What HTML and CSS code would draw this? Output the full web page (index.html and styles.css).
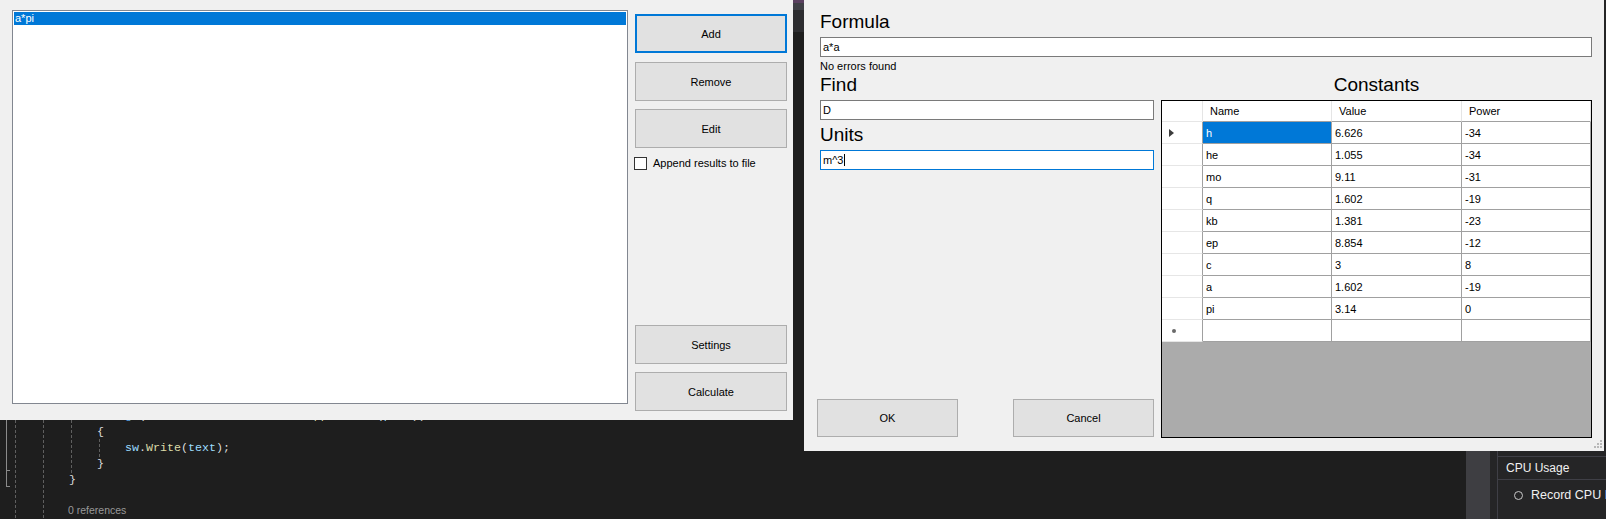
FILE: index.html
```html
<!DOCTYPE html>
<html>
<head>
<meta charset="utf-8">
<link rel="stylesheet" href="styles.css">
</head>
<body>
<div class="desktop">
  <div class="editor">
    <svg class="guides" width="120" height="519" viewBox="0 0 120 519">
      <path d="M6.5 400V487M6.5 470.5H10M6.5 486.5H10" stroke="#8a8a8a" stroke-width="1" fill="none"/>
      <path d="M15.5 400V519M43.5 400V519M71.5 400V474M99.5 439V457" stroke="#5f5f5f" stroke-width="1" stroke-dasharray="3 2" fill="none"/>
    </svg>
    <div class="code">
      <div class="code-line">            <span class="kw">using</span> (<span class="ty">StreamWriter</span> <span class="var">sw</span> = <span class="ty">File</span>.<span class="fn">AppendText</span>(<span class="var">path</span>))</div>
      <div class="code-line">            {</div>
      <div class="code-line">                <span class="var">sw</span>.<span class="fn">Write</span>(<span class="var">text</span>);</div>
      <div class="code-line">            }</div>
      <div class="code-line">        }</div>
      <div class="lens">0 references</div>
    </div>
  </div>

  <div class="scroll-col"></div>
  <div class="tool-panel">
    <div class="tool-inner">
      <div class="tool-head">CPU Usage</div>
      <div class="tool-row"><span class="radio"></span><span>Record CPU Profile</span></div>
    </div>
  </div>

  <div class="strip"></div>

  <div class="win-left">
    <div class="listbox">
      <div class="list-item selected">a*pi</div>
    </div>
    <div class="btn-col">
      <div class="btn default">Add</div>
      <div class="btn">Remove</div>
      <div class="btn">Edit</div>
      <label class="check"><span class="check-box"></span><span>Append results to file</span></label>
      <div class="btn push">Settings</div>
      <div class="btn">Calculate</div>
    </div>
  </div>

  <div class="win-right">
    <div class="big-label">Formula</div>
    <div class="textbox wide">a*a</div>
    <div class="status">No errors found</div>
    <div class="body">
      <div class="left-col">
        <div class="big-label">Find</div>
        <div class="textbox">D</div>
        <div class="big-label">Units</div>
        <div class="textbox focus">m^3<span class="caret"></span></div>
        <div class="dlg-row">
          <div class="btn dlg">OK</div>
          <div class="btn dlg">Cancel</div>
        </div>
      </div>
      <div class="right-col">
        <div class="big-label center">Constants</div>
        <div class="dgv">
          <div class="dgv-row head">
            <div class="cell rh hc"></div>
            <div class="cell hc">Name</div>
            <div class="cell hc">Value</div>
            <div class="cell hc">Power</div>
          </div>
          <div class="dgv-row">
            <div class="cell rh"><span class="tri"></span></div>
            <div class="cell sel">h</div>
            <div class="cell">6.626</div>
            <div class="cell">-34</div>
          </div>
          <div class="dgv-row">
            <div class="cell rh"></div>
            <div class="cell">he</div>
            <div class="cell">1.055</div>
            <div class="cell">-34</div>
          </div>
          <div class="dgv-row">
            <div class="cell rh"></div>
            <div class="cell">mo</div>
            <div class="cell">9.11</div>
            <div class="cell">-31</div>
          </div>
          <div class="dgv-row">
            <div class="cell rh"></div>
            <div class="cell">q</div>
            <div class="cell">1.602</div>
            <div class="cell">-19</div>
          </div>
          <div class="dgv-row">
            <div class="cell rh"></div>
            <div class="cell">kb</div>
            <div class="cell">1.381</div>
            <div class="cell">-23</div>
          </div>
          <div class="dgv-row">
            <div class="cell rh"></div>
            <div class="cell">ep</div>
            <div class="cell">8.854</div>
            <div class="cell">-12</div>
          </div>
          <div class="dgv-row">
            <div class="cell rh"></div>
            <div class="cell">c</div>
            <div class="cell">3</div>
            <div class="cell">8</div>
          </div>
          <div class="dgv-row">
            <div class="cell rh"></div>
            <div class="cell">a</div>
            <div class="cell">1.602</div>
            <div class="cell">-19</div>
          </div>
          <div class="dgv-row">
            <div class="cell rh"></div>
            <div class="cell">pi</div>
            <div class="cell">3.14</div>
            <div class="cell">0</div>
          </div>
          <div class="dgv-row">
            <div class="cell rh"><span class="star"></span></div>
            <div class="cell"></div>
            <div class="cell"></div>
            <div class="cell"></div>
          </div>
        </div>
      </div>
    </div>
    <svg class="grip" width="8" height="8" viewBox="0 0 8 8">
      <rect x="6" y="0" width="2" height="2" fill="#b8b8b8"/>
      <rect x="3" y="3" width="2" height="2" fill="#b8b8b8"/>
      <rect x="6" y="3" width="2" height="2" fill="#b8b8b8"/>
      <rect x="0" y="6" width="2" height="2" fill="#b8b8b8"/>
      <rect x="3" y="6" width="2" height="2" fill="#b8b8b8"/>
      <rect x="6" y="6" width="2" height="2" fill="#b8b8b8"/>
    </svg>
  </div>
</div>
</body>
</html>
```

FILE: styles.css
```css
* { box-sizing: border-box; }
html, body { margin: 0; padding: 0; }
body {
  width: 1606px;
  height: 519px;
  overflow: hidden;
  background: #1e1e1e;
  font-family: "Liberation Sans", Arial, sans-serif;
  font-size: 11px;
  color: #000;
}
.desktop { position: relative; width: 1606px; height: 519px; }

/* code editor behind the windows */
.editor {
  position: absolute;
  left: 0; top: 0;
  width: 1466px; height: 519px;
  background: #1e1e1e;
}
.guides { position: absolute; left: 0; top: 0; }
.code {
  padding: 408px 0 0 13px;
  font-family: "Liberation Mono", "DejaVu Sans Mono", monospace;
  font-size: 11.67px;
  line-height: 16px;
  color: #dcdcdc;
}
.code-line { height: 16px; white-space: pre; }
.kw { color: #569cd6; }
.ty { color: #4ec9b0; }
.fn { color: #dcdcaa; }
.var { color: #9cdcfe; }
.lens {
  font-family: "Liberation Sans", sans-serif;
  font-size: 10.5px;
  line-height: 12px;
  color: #999999;
  margin: 16px 0 0 55px;
}

.scroll-col {
  position: absolute;
  left: 1466px; top: 0;
  width: 24px; height: 519px;
  background: #3e3e42;
}
.tool-panel {
  position: absolute;
  left: 1490px; top: 0;
  width: 116px; height: 519px;
  background: #252526;
  padding: 451px 0 0 7px;
}
.tool-inner { border-left: 1px solid #3f3f46; height: 100%; padding-top: 5px; }
.tool-head {
  height: 24px;
  border-top: 1px solid #3f3f46;
  border-bottom: 1px solid #3f3f46;
  color: #f1f1f1;
  font-size: 12px;
  line-height: 22px;
  padding-left: 8px;
  white-space: nowrap;
}
.tool-row {
  display: flex;
  align-items: center;
  gap: 8px;
  height: 30px;
  padding-left: 16px;
  color: #f1f1f1;
  font-size: 12.5px;
  white-space: nowrap;
}
.radio {
  width: 9px; height: 9px;
  border: 1px solid #c8c8c8;
  border-radius: 50%;
  flex: none;
}

.strip {
  position: absolute;
  left: 793px; top: 0;
  width: 11px; height: 40px;
  background: linear-gradient(to bottom, #5a4060 0, #5a4060 3px, #3f3f46 3px, #3f3f46 10px, #2d2d30 10px, #2d2d30 32px, #1e1e1e 32px);
}

/* left window */
.win-left {
  position: absolute;
  left: 0; top: 0;
  width: 793px; height: 420px;
  background: #f0f0f0;
  display: flex;
  align-items: flex-start;
  padding: 10px 6px 0 12px;
}
.listbox {
  width: 616px; height: 394px;
  border: 1px solid #828790;
  background: #fff;
  padding: 1px;
}
.list-item { height: 13px; line-height: 13px; padding-left: 1px; white-space: nowrap; }
.list-item.selected { background: #0078d7; color: #fff; }
.btn-col {
  width: 152px; height: 397px;
  margin: 4px 0 0 7px;
  display: flex;
  flex-direction: column;
  gap: 8px;
}
.btn {
  height: 39px;
  border: 1px solid #adadad;
  background: #e1e1e1;
  display: flex;
  align-items: center;
  justify-content: center;
  font-size: 11px;
  color: #000;
  flex: none;
}
.btn.default { border: 2px solid #0078d7; margin-bottom: 1px; }
.btn.push { margin-top: auto; }
.check {
  display: flex;
  align-items: center;
  gap: 6px;
  height: 14px;
  margin-left: -1px;
  white-space: nowrap;
}
.check-box {
  width: 13px; height: 13px;
  border: 1px solid #333;
  background: #fff;
  flex: none;
}

/* right window */
.win-right {
  position: absolute;
  left: 804px; top: 0;
  width: 800px; height: 451px;
  background: #f0f0f0;
  padding: 11px 12px 13px 16px;
  display: flex;
  flex-direction: column;
}
.big-label {
  font-size: 19px;
  line-height: 22px;
  height: 22px;
  white-space: nowrap;
  flex: none;
}
.big-label.center { text-align: center; }
.textbox {
  height: 20px;
  border: 1px solid #7a7a7a;
  background: #fff;
  padding: 0 2px;
  display: flex;
  align-items: center;
  margin: 4px 0;
  flex: none;
  white-space: nowrap;
}
.textbox.wide { margin-bottom: 0; }
.textbox.focus { border-color: #0078d7; }
.caret { width: 1px; height: 12px; background: #000; margin-left: 1px; }
.status { font-size: 11px; line-height: 13px; margin-top: 3px; flex: none; }
.body {
  flex: 1;
  display: flex;
  gap: 7px;
  margin-top: 1px;
}
.left-col {
  width: 334px;
  display: flex;
  flex-direction: column;
}
.dlg-row {
  margin: auto 0 1px -3px;
  display: flex;
  justify-content: space-between;
}
.btn.dlg { width: 141px; height: 38px; }
.right-col {
  flex: 1;
  display: flex;
  flex-direction: column;
}
.dgv {
  flex: 1;
  margin-top: 4px;
  border: 1px solid #000;
  background: #ababab;
  overflow: hidden;
}
.dgv-row {
  display: grid;
  grid-template-columns: 41px 129px 130px 129px;
  height: 22px;
}
.dgv-row.head { height: 21px; }
.cell {
  border-right: 1px solid #a0a0a0;
  border-bottom: 1px solid #a0a0a0;
  background: #fff;
  padding-left: 3px;
  display: flex;
  align-items: center;
  white-space: nowrap;
  overflow: hidden;
}
.cell.rh { border-bottom-color: #e6e6e6; }
.cell.hc { border-right-color: #e5e5e5; padding-left: 7px; }
.cell.sel { background: #0078d7; color: #fff; }
.tri {
  width: 0; height: 0;
  margin-left: 4px;
  border-left: 5px solid #3c3c3c;
  border-top: 4px solid transparent;
  border-bottom: 4px solid transparent;
}
.star {
  width: 4px; height: 4px;
  margin-left: 7px;
  border-radius: 50%;
  background: #6a6a6a;
}
.grip { position: absolute; right: 2px; bottom: 3px; }
```
